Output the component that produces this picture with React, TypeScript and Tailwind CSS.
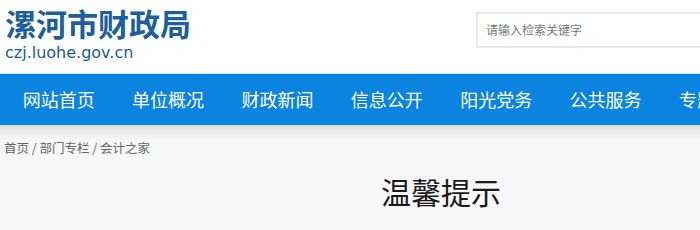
export default function App() {
  const nav = ["网站首页", "单位概况", "财政新闻", "信息公开", "阳光党务", "公共服务", "专题"];

  return (
    <div
      className="w-[700px] h-[230px] overflow-hidden bg-[#f7f7f7]"
      style={{ fontFamily: '"Noto Sans CJK SC", "Noto Sans", sans-serif' }}
    >
      <header className="h-[73px] bg-white flex items-start justify-between">
        <div className="pl-[5px] pt-[6px]">
          <div className="text-[31px] leading-[34px] font-bold text-[#1d5f9c]">漯河市财政局</div>
          <div
            className="text-[16px] leading-[18px] text-[#1b5a93] mt-[4px]"
            style={{ fontFamily: '"DejaVu Sans", sans-serif' }}
          >
            czj.luohe.gov.cn
          </div>
        </div>
        <div className="mt-[12px] w-[224px] h-[36px] border-2 border-r-0 border-[#e8e8e8] flex items-center pl-[8px] text-[12px] text-[#7a7a7a] shrink-0">
          请输入检索关键字
        </div>
      </header>
      <div className="h-px bg-[#cfe3f5]" />
      <nav className="h-[51px] bg-[#0a84e0] flex items-center pl-[4px] whitespace-nowrap overflow-hidden">
        {nav.map((n) => (
          <span key={n} className="px-[18.7px] text-[18px] text-white shrink-0">
            {n}
          </span>
        ))}
      </nav>
      <div className="h-[15px] bg-gradient-to-b from-[#dedede] to-[#f7f7f7]" />
      <div className="pl-[4px] -mt-[1px] text-[12.5px] leading-[18px] text-[#666]">首页 / 部门专栏 / 会计之家</div>
      <div className="pl-[381px] mt-[16px] text-[30px] leading-[36px] text-[#1a1a1a]">温馨提示</div>
    </div>
  );
}
